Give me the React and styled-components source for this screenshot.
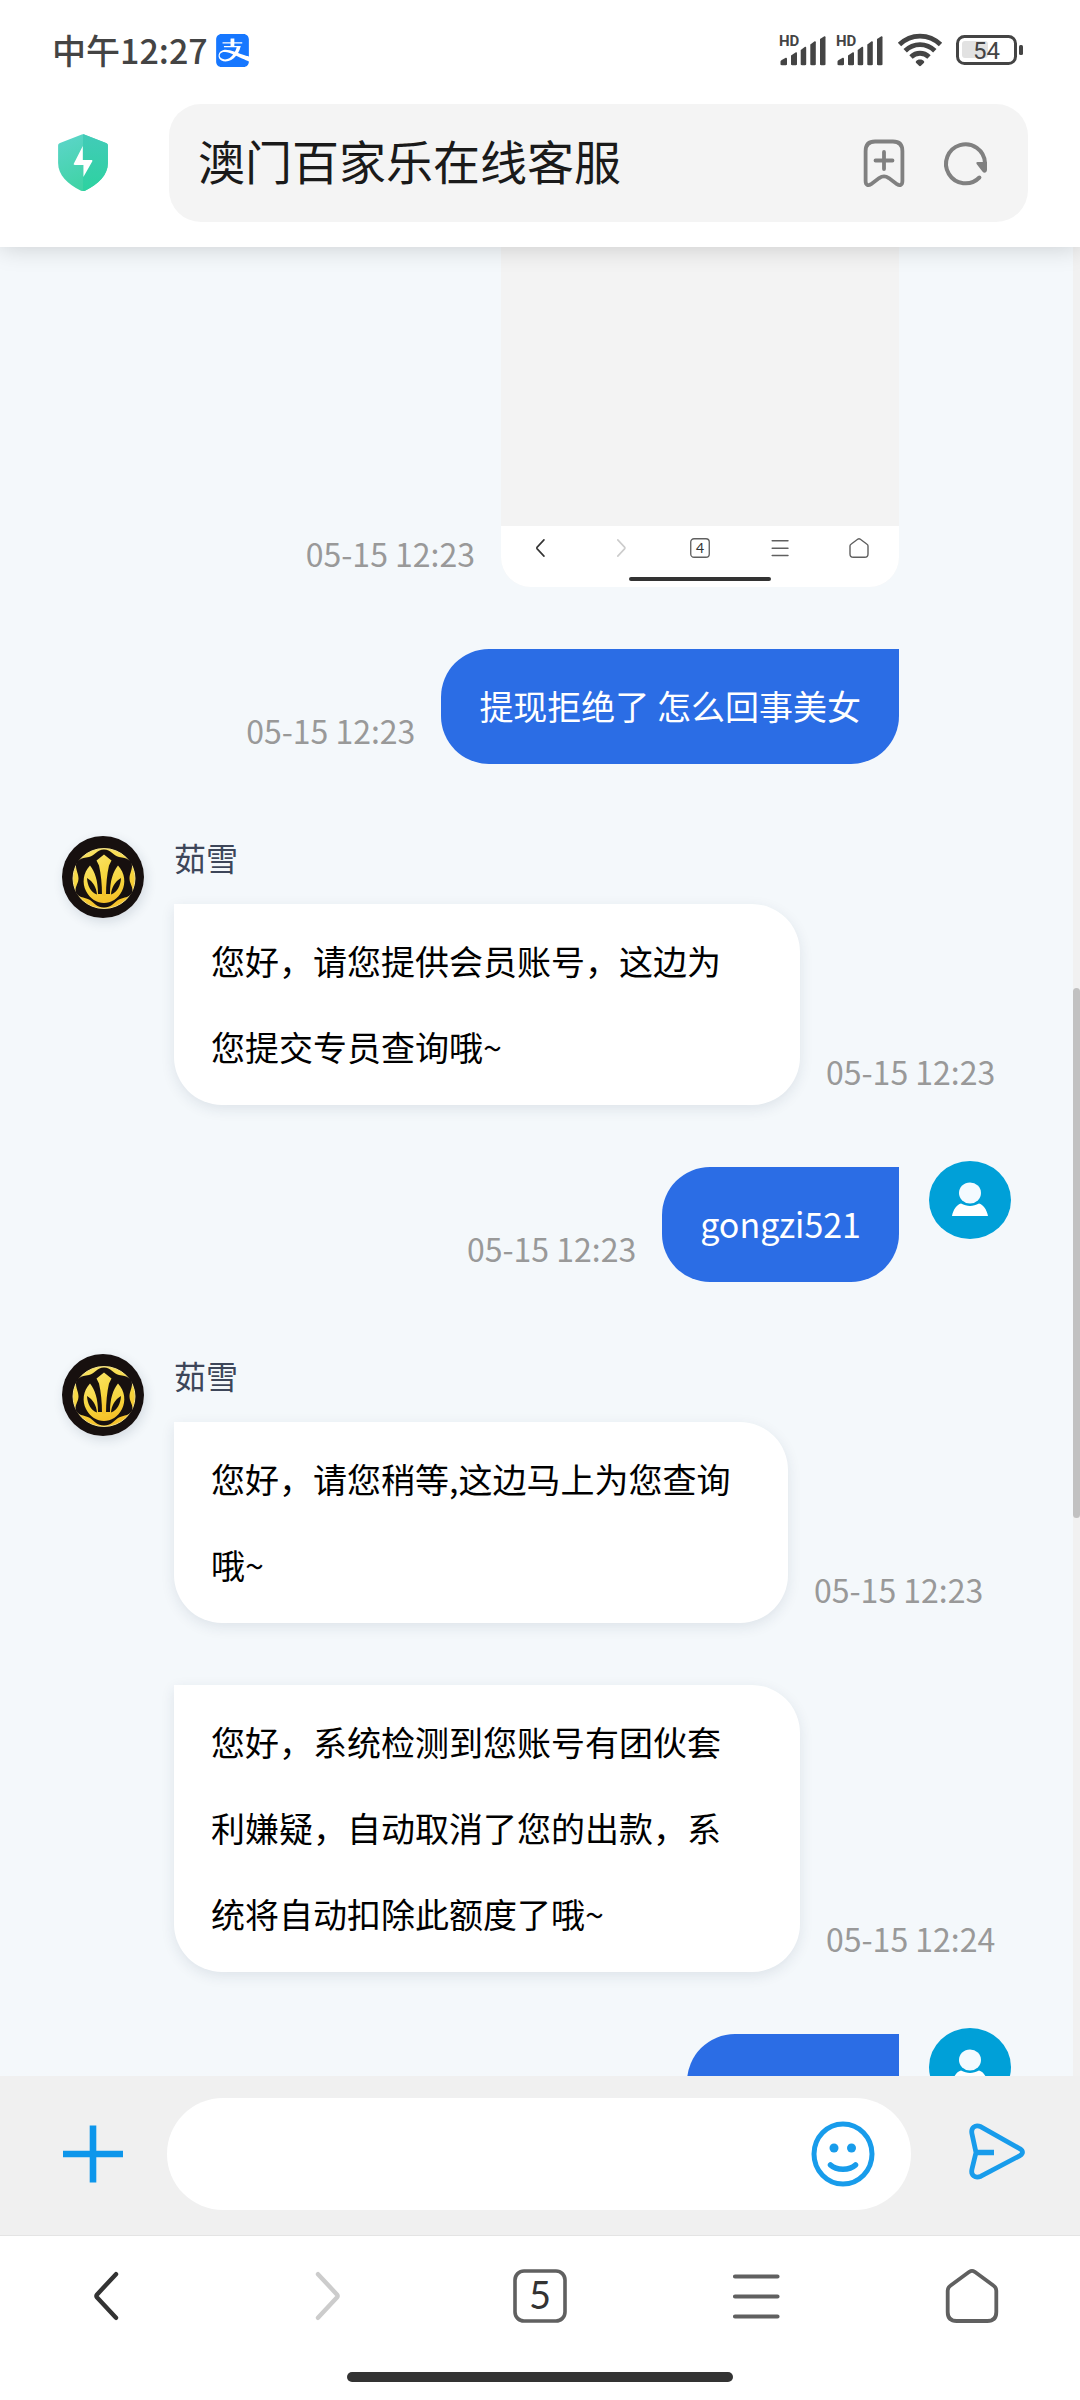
import React from "react";
import styled, { createGlobalStyle } from "styled-components";
import { SiAlipay } from "react-icons/si";

const GlobalStyle = createGlobalStyle`
  * {
    box-sizing: border-box;
  }

  body {
    margin: 0;
    background: #fff;
    font-family: "Noto Sans CJK SC", "Noto Sans", sans-serif;
  }

  button {
    padding: 0;
    border: 0;
    background: none;
    font-family: inherit;
  }

  svg {
    display: block;
    flex-shrink: 0;
    overflow: visible;
  }
`;

const Page = styled.div`
  display: flex;
  flex-direction: column;
  height: 100vh;
`;

const Header = styled.header`
  position: relative;
  z-index: 1;
  background: #fff;
  box-shadow: 0 0 24px rgba(0, 0, 0, 0.18);
`;

const StatusBar = styled.div`
  display: flex;
  align-items: center;
  justify-content: space-between;
  height: 100px;
  padding: 0 57px 0 52px;
  color: #444;
`;

const StatusGroup = styled.div`
  display: flex;
  align-items: center;
  gap: ${props => props.$gap}px;
`;

const Clock = styled.span`
  font-size: 34px;
  line-height: 40px;
  font-weight: 500;
`;

const Toolbar = styled.div`
  display: flex;
  align-items: center;
  gap: 61px;
  padding: 4px 52px 25px 58px;
`;

const AddressBar = styled.div`
  display: flex;
  flex: 1;
  align-items: center;
  gap: 39px;
  height: 118px;
  min-width: 0;
  padding: 0 40px 0 29px;
  border-radius: 32px;
  background: #f4f4f4;
`;

const Address = styled.input`
  flex: 1;
  min-width: 0;
  padding: 0 0 6px;
  border: 0;
  outline: 0;
  background: none;
  color: #1a1a1a;
  font-family: inherit;
  font-size: 47px;
  line-height: 68px;
`;

const Chat = styled.main`
  position: relative;
  flex: 1;
  min-height: 0;
  overflow: hidden;
  background: #f4f8fb;
`;

const Messages = styled.div`
  display: flex;
  flex-direction: column;
  gap: 62px;
  padding: 0 69px 0 62px;
`;

const ScrollTrack = styled.div`
  position: absolute;
  top: 0;
  right: 0;
  bottom: 0;
  width: 7px;
  background: #f1f1f1;
`;

const ScrollThumb = styled.div`
  position: absolute;
  top: 40.5%;
  width: 100%;
  height: 29%;
  border-radius: 4px;
  background: #c1c1c1;
`;

const Row = styled.div`
  display: flex;
  gap: 30px;
  justify-content: ${props => (props.$sent ? "flex-end" : "flex-start")};
`;

const AvatarSlot = styled.div`
  flex-shrink: 0;
  width: 82px;
  margin-top: ${props => (props.$sent ? "-6px" : "10px")};
`;

const RoundShadow = styled.div`
  height: 82px;
  border-radius: 50%;
  box-shadow: 2px 4px 12px rgba(30, 50, 80, 0.14);
`;

const Body = styled.div`
  min-width: 0;
`;

const Name = styled.div`
  margin-bottom: 16px;
  color: #3d4659;
  font-size: 32px;
  line-height: 62px;
`;

const Line = styled.div`
  display: flex;
  align-items: flex-end;
  gap: 26px;
`;

const Time = styled.time`
  flex-shrink: 0;
  padding-bottom: 10px;
  color: #999;
  font-size: 32px;
  line-height: 48px;
  white-space: nowrap;
`;

const Bubble = styled.div`
  min-width: ${props => props.$min || 0}px;
  min-height: 115px;
  max-width: ${props => props.$max || 626}px;
  padding: ${props => (props.$sent ? "14px 38px 15px" : "14px 46px 15px 37px")};
  border-radius: ${props => (props.$sent ? "48px 0 48px 48px" : "0 48px 48px 48px")};
  background: ${props => (props.$sent ? "#2b6de5" : "#fff")};
  box-shadow: ${props => (props.$sent ? "none" : "0 4px 14px rgba(30, 50, 80, 0.1)")};
  color: ${props => (props.$sent ? "#fff" : "#000")};
  font-size: 34px;
  line-height: 86px;
`;

const Photo = styled.div`
  display: flex;
  flex-direction: column;
  width: 398px;
  height: 340px;
  overflow: hidden;
  border-radius: 0 0 30px 30px;
  background: #f3f3f3;
`;

const PhotoFooter = styled.div`
  margin-top: auto;
  height: 61px;
  padding-top: 12px;
  background: #fff;
`;

const PhotoNav = styled.div`
  display: grid;
  grid-template-columns: repeat(5, 1fr);
  justify-items: center;
`;

const PhotoHandle = styled.div`
  width: 142px;
  height: 4px;
  margin: 19px auto 0;
  border-radius: 2px;
  background: #333;
`;

const Composer = styled.form`
  display: flex;
  align-items: center;
  padding: 22px 52px 25px 60px;
  border-bottom: 1px solid #e4e4e4;
  background: #f0f0f0;
`;

const Field = styled.div`
  display: flex;
  flex: 1;
  align-items: center;
  height: 112px;
  min-width: 0;
  margin: 0 55px 0 41px;
  padding: 0 36px 0 48px;
  border-radius: 56px;
  background: #fff;
`;

const Input = styled.input`
  flex: 1;
  min-width: 0;
  border: 0;
  outline: 0;
  background: none;
  font-family: inherit;
  font-size: 34px;
`;

const Footer = styled.footer`
  padding: 33px 0 18px;
  background: #fff;
`;

const Nav = styled.nav`
  display: grid;
  grid-template-columns: repeat(5, 1fr);
  justify-items: center;
`;

const Handle = styled.div`
  width: 386px;
  height: 10px;
  margin: 49px auto 0;
  border-radius: 5px;
  background: #333;
`;

const Signal = () => (
  <svg width="48" height="34" viewBox="0 0 48 34" fill="#444">
    <text x="0" y="13" fontFamily="Roboto" fontSize="15" fontWeight="700">
      HD
    </text>
    <path d="M1.500 31v-2c0-1 .4-1.500 1.200-2l3.600-2c1-.5 1.700-.2 1.700.9V31c0 .8-.4 1.200-1.200 1.200H2.700c-.8 0-1.200-.4-1.200-1.200z" />
    <path d="M12 22.500l4.500-3c.9-.5 1.500-.2 1.500.8V31c0 .8-.4 1.200-1.200 1.200h-3.600c-.8 0-1.200-.4-1.200-1.200z" />
    <path d="M21.700 17l4-3c.9-.5 1.500-.2 1.500.8V31c0 .8-.4 1.200-1.200 1.200h-3.100c-.8 0-1.200-.4-1.200-1.200z" />
    <path d="M31.300 11.500l4-3c.9-.5 1.500-.2 1.500.8V31c0 .8-.4 1.200-1.200 1.200h-3.100c-.8 0-1.200-.4-1.200-1.200z" />
    <path d="M41 6l4-2.600c.9-.5 1.500-.2 1.500.8V31c0 .8-.4 1.200-1.200 1.200h-3.100C41.400 32.200 41 31.800 41 31z" />
  </svg>
);

const Wifi = () => (
  <svg width="44" height="34" viewBox="0 0 44 34" fill="none" stroke="#444" strokeWidth="4.800">
    <path d="M1.500 11.500C13 .2 31 .2 42.500 11.500" />
    <path d="M7.200 17.800c8.300-8.300 21.300-8.300 29.600 0" />
    <path d="M13 24c5.200-5 12.800-5 18 0" />
    <path d="M22 26.500c-1.800 0-3.200.6-4 1.800-.4.700-.3 1.200.2 1.700l2.600 2.600c.8.800 1.600.8 2.400 0l2.600-2.600c.5-.5.6-1 .2-1.700-.8-1.200-2.200-1.800-4-1.800z" fill="#444" stroke="none" />
  </svg>
);

const Battery = () => (
  <svg width="67" height="30" viewBox="0 0 67 30">
    <rect x="6" y="6" width="26" height="17" rx="3" fill="#e2e2e2" />
    <rect x="1.500" y="1.500" width="58" height="27" rx="7" fill="none" stroke="#444" strokeWidth="3" />
    <rect x="63" y="10" width="4" height="10" rx="1.500" fill="#444" />
    <text x="30.500" y="24" textAnchor="middle" fontFamily="Roboto" fontSize="24" fill="#444">
      54
    </text>
  </svg>
);

const Shield = () => (
  <svg width="50" height="58" viewBox="0 0 50 58">
    <defs>
      <linearGradient id="shield" x1="0" y1="0" x2="0.400" y2="1">
        <stop offset="0" stopColor="#5dd5cb" />
        <stop offset="1" stopColor="#3fd3a4" />
      </linearGradient>
      <linearGradient id="shieldSide" x1="0" y1="0" x2="0" y2="1">
        <stop offset="0" stopColor="#42cbb8" />
        <stop offset="1" stopColor="#2dd2a0" />
      </linearGradient>
    </defs>
    <path d="M22.500.9c1.800-.8 3.200-.8 5 0L48 9c1.300.6 1.900 1.300 1.900 2.700V29c0 12-9.900 21.500-22.400 27.500-1.800.8-3.200.8-5 0C10 50.500.1 41 .1 29V11.700C.1 10.300.7 9.600 2 9z" fill="url(#shield)" />
    <path d="M25 .3c.9 0 1.600.2 2.500.6L48 9c1.300.6 1.900 1.300 1.900 2.700V29c0 12-9.900 21.500-22.400 27.500-.9.400-1.600.6-2.500.6z" fill="url(#shieldSide)" />
    <path d="M24.800 12v14h8.400c1.200 0 1.600.6 1 1.600L25.400 43V31H17c-1.300 0-1.700-.7-1-1.700z" fill="#fff" />
  </svg>
);

const BookmarkAdd = () => (
  <svg width="42" height="48" viewBox="0 0 42 48" fill="none" stroke="#808080" strokeWidth="3.800" strokeLinecap="round" strokeLinejoin="round">
    <path d="M2.600 12c0-6.500 3-9.500 9.500-9.500h17.800c6.500 0 9.500 3 9.500 9.500v30c0 4-2.400 5.200-5.400 3.200l-8.200-6.100c-3.300-2.300-6.300-2.300-9.600 0L8 45.200c-3 2-5.400.8-5.400-3.200z" />
    <path d="M21 13v17M12.500 21.500h17" />
  </svg>
);

const Refresh = () => (
  <svg width="44" height="46" viewBox="0 0 44 46">
    <path d="M41 25.500V23a19.500 19.500 0 1 0-5.600 14.500" fill="none" stroke="#808080" strokeWidth="4" strokeLinecap="round" />
    <path d="M33.500 22H43v8c-.5 3-2.800 3.600-4.600 1.400l-5.600-7.200c-.8-1.200-.6-2.200.7-2.200z" fill="#808080" />
  </svg>
);

const BrandAvatar = () => (
  <RoundShadow>
    <svg width="82" height="82" viewBox="0 0 82 82">
      <defs>
        <linearGradient id="gold" x1="0" y1="0" x2="0.300" y2="1">
          <stop offset="0" stopColor="#fae468" />
          <stop offset="0.600" stopColor="#f6d63e" />
          <stop offset="1" stopColor="#f6c22a" />
        </linearGradient>
      </defs>
      <circle cx="41" cy="41" r="41" fill="#17100f" />
      <ellipse cx="42" cy="42.500" rx="31" ry="30" fill="url(#gold)" stroke="#f4e28a" strokeWidth="1" />
      <path d="M42 13.500c7 0 9 6 15 7.500 8 1 13.500 3.500 13 9.500-.4 5-2.500 7.500-2.500 12s3 7.500 3 12c-1 8-9 6-14.500 9.500-4.500 3-7 7.500-14 7.500s-9.500-4.500-14-7.500C22.500 60.500 14.500 62.500 13.500 54.500c0-4.500 3-7.500 3-12s-2.100-7-2.500-12c-.5-6 5-8.500 13-9.500 6-1.500 8-7.500 15-7.500z" fill="#17100f" />
      <path d="M28 29.500C21 37 20 47 24 55c4 8 11 12 18 12s14-4 18-12c4-8 3-18-4-25.500-5 6-8 15.500-8 28.500H36c0-13-3-22.500-8-28.500z" fill="url(#gold)" />
      <path d="M42 18.500l7.500 6-2.500 5C45 38 44 48 44 60h-4c0-12-1-22-3-30.500l-2.500-5z" fill="url(#gold)" />
      <path d="M25 42c.5 8 3.500 14 10 16.500C34.500 51.500 31 45.500 25 42zM59 42c-.5 8-3.500 14-10 16.500C49.500 51.500 53 45.500 59 42z" fill="#17100f" />
    </svg>
  </RoundShadow>
);

const UserAvatar = () => (
  <svg width="82" height="78" viewBox="0 0 82 78">
    <ellipse cx="41" cy="39" rx="41" ry="39" fill="#00a0d8" />
    <ellipse cx="41" cy="32" rx="11" ry="10.500" fill="#f4faff" />
    <path d="M32 42.500c6 3.200 12 3.200 18 0 4 .8 8 6.500 9 12.500H23c1-6 5-11.700 9-12.500z" fill="#fff" />
  </svg>
);

const Plus = () => (
  <svg width="66" height="66" viewBox="0 0 66 66" stroke="#0d96eb" strokeWidth="6.600">
    <path d="M3 33h60M33 4.500v57" />
  </svg>
);

const Smiley = () => (
  <svg width="64" height="66" viewBox="0 0 64 66" fill="none" stroke="#189ceb" strokeWidth="5">
    <ellipse cx="32" cy="33" rx="29" ry="30" />
    <path d="M19.500 44c6 5.600 19 5.600 25 0" strokeWidth="5.500" strokeLinecap="round" />
    <circle cx="23" cy="27" r="4.500" fill="#189ceb" stroke="none" />
    <circle cx="40.500" cy="27" r="4.500" fill="#189ceb" stroke="none" />
  </svg>
);

const Send = () => (
  <svg width="62" height="64" viewBox="0 0 62 64" fill="none" stroke="#189ceb" strokeWidth="4.800" strokeLinejoin="round">
    <path d="M15 4.800l39 22c3.300 2.300 3.300 4.600 0 6.800l-39 20.600c-6 2.500-10.500-.8-9-7.200L10 30.500 6 12C4.600 5.600 9 2.200 15 4.800z" />
    <path d="M9.500 30.500H28" strokeWidth="5.500" />
  </svg>
);

const Chevron = ({ size, color, forward }) => (
  <svg width={size} height={size} viewBox="0 0 54 54" fill="none" stroke={color} strokeWidth="4.400" strokeLinecap="round" strokeLinejoin="round">
    <path d={forward ? "M21 5.200l18.900 20.200c1 1.200 1 2 0 3.200L21 48.800" : "M35 5.200L16.100 25.400c-1 1.200-1 2 0 3.200L35 48.800"} />
  </svg>
);

const Tabs = ({ size, count, color = "#606060" }) => (
  <svg width={size} height={size} viewBox="0 0 54 54">
    <rect x="2" y="2" width="50" height="50" rx="9" fill="none" stroke={color} strokeWidth="3.600" />
    <text x="27" y="40" textAnchor="middle" fontFamily="Lato" fontSize="38" fill="#333">
      {count}
    </text>
  </svg>
);

const Menu = ({ size, color = "#606060" }) => (
  <svg width={size} height={size} viewBox="0 0 54 54" stroke={color} strokeWidth="4.200" strokeLinecap="round">
    <path d="M6 7.500h42.500M6 27.500h42.500M6 47.500h42.500" />
  </svg>
);

const Home = ({ size, color = "#606060" }) => (
  <svg width={size} height={size} viewBox="0 0 54 54" fill="none" stroke={color} strokeWidth="3.800" strokeLinejoin="round">
    <path d="M24.300 2.800c2-1.300 3.400-1.300 5.400 0l19 14c2 1.400 2.600 2.700 2.600 5V43c0 6.200-2.800 9-9 9H11.700c-6.200 0-9-2.800-9-9V21.800c0-2.300.6-3.600 2.600-5z" />
  </svg>
);

const Received = ({ name, text, time, max }) => (
  <Row>
    <AvatarSlot>{name && <BrandAvatar />}</AvatarSlot>
    <Body>
      {name && <Name>{name}</Name>}
      <Line>
        <Bubble $max={max}>{text}</Bubble>
        <Time>{time}</Time>
      </Line>
    </Body>
  </Row>
);

const Sent = ({ children, time, avatar }) => (
  <Row $sent>
    <Line>
      {time && <Time>{time}</Time>}
      {children}
    </Line>
    <AvatarSlot $sent>{avatar && <UserAvatar />}</AvatarSlot>
  </Row>
);

const App = () => (
  <Page lang="zh-CN">
    <GlobalStyle />
    <Header>
      <StatusBar>
        <StatusGroup $gap={8}>
          <Clock>中午12:27</Clock>
          <SiAlipay size={33} color="#1677ff" />
        </StatusGroup>
        <StatusGroup $gap={14}>
          <StatusGroup $gap={9}>
            <Signal />
            <Signal />
          </StatusGroup>
          <Wifi />
          <Battery />
        </StatusGroup>
      </StatusBar>
      <Toolbar>
        <Shield />
        <AddressBar>
          <Address aria-label="网址" defaultValue="澳门百家乐在线客服" />
          <button aria-label="收藏">
            <BookmarkAdd />
          </button>
          <button aria-label="刷新">
            <Refresh />
          </button>
        </AddressBar>
      </Toolbar>
    </Header>

    <Chat>
      <Messages>
        <Sent time="05-15 12:23">
          <Photo>
            <PhotoFooter>
              <PhotoNav>
                <Chevron size={20} color="#333" />
                <Chevron size={20} color="#ccc" forward />
                <Tabs size={20} count={4} />
                <Menu size={20} />
                <Home size={20} />
              </PhotoNav>
              <PhotoHandle />
            </PhotoFooter>
          </Photo>
        </Sent>
        <Sent time="05-15 12:23">
          <Bubble $sent>提现拒绝了 怎么回事美女</Bubble>
        </Sent>
        <Received
          name="茹雪"
          text="您好，请您提供会员账号，这边为您提交专员查询哦~"
          time="05-15 12:23"
        />
        <Sent time="05-15 12:23" avatar>
          <Bubble $sent>gongzi521</Bubble>
        </Sent>
        <Received
          name="茹雪"
          text="您好，请您稍等,这边马上为您查询哦~"
          time="05-15 12:23"
          max={614}
        />
        <Received
          text="您好，系统检测到您账号有团伙套利嫌疑，自动取消了您的出款，系统将自动扣除此额度了哦~"
          time="05-15 12:24"
        />
        <Sent avatar>
          <Bubble $sent $min={212} />
        </Sent>
      </Messages>
      <ScrollTrack>
        <ScrollThumb />
      </ScrollTrack>
    </Chat>

    <Composer onSubmit={e => e.preventDefault()}>
      <button type="button" aria-label="添加">
        <Plus />
      </button>
      <Field>
        <Input aria-label="消息" />
        <button type="button" aria-label="表情">
          <Smiley />
        </button>
      </Field>
      <button aria-label="发送">
        <Send />
      </button>
    </Composer>

    <Footer>
      <Nav>
        <button aria-label="后退">
          <Chevron size={54} color="#333" />
        </button>
        <button aria-label="前进">
          <Chevron size={54} color="#ccc" forward />
        </button>
        <button aria-label="标签页">
          <Tabs size={54} count={5} />
        </button>
        <button aria-label="菜单">
          <Menu size={54} />
        </button>
        <button aria-label="主页">
          <Home size={54} />
        </button>
      </Nav>
      <Handle />
    </Footer>
  </Page>
);

export default App;
